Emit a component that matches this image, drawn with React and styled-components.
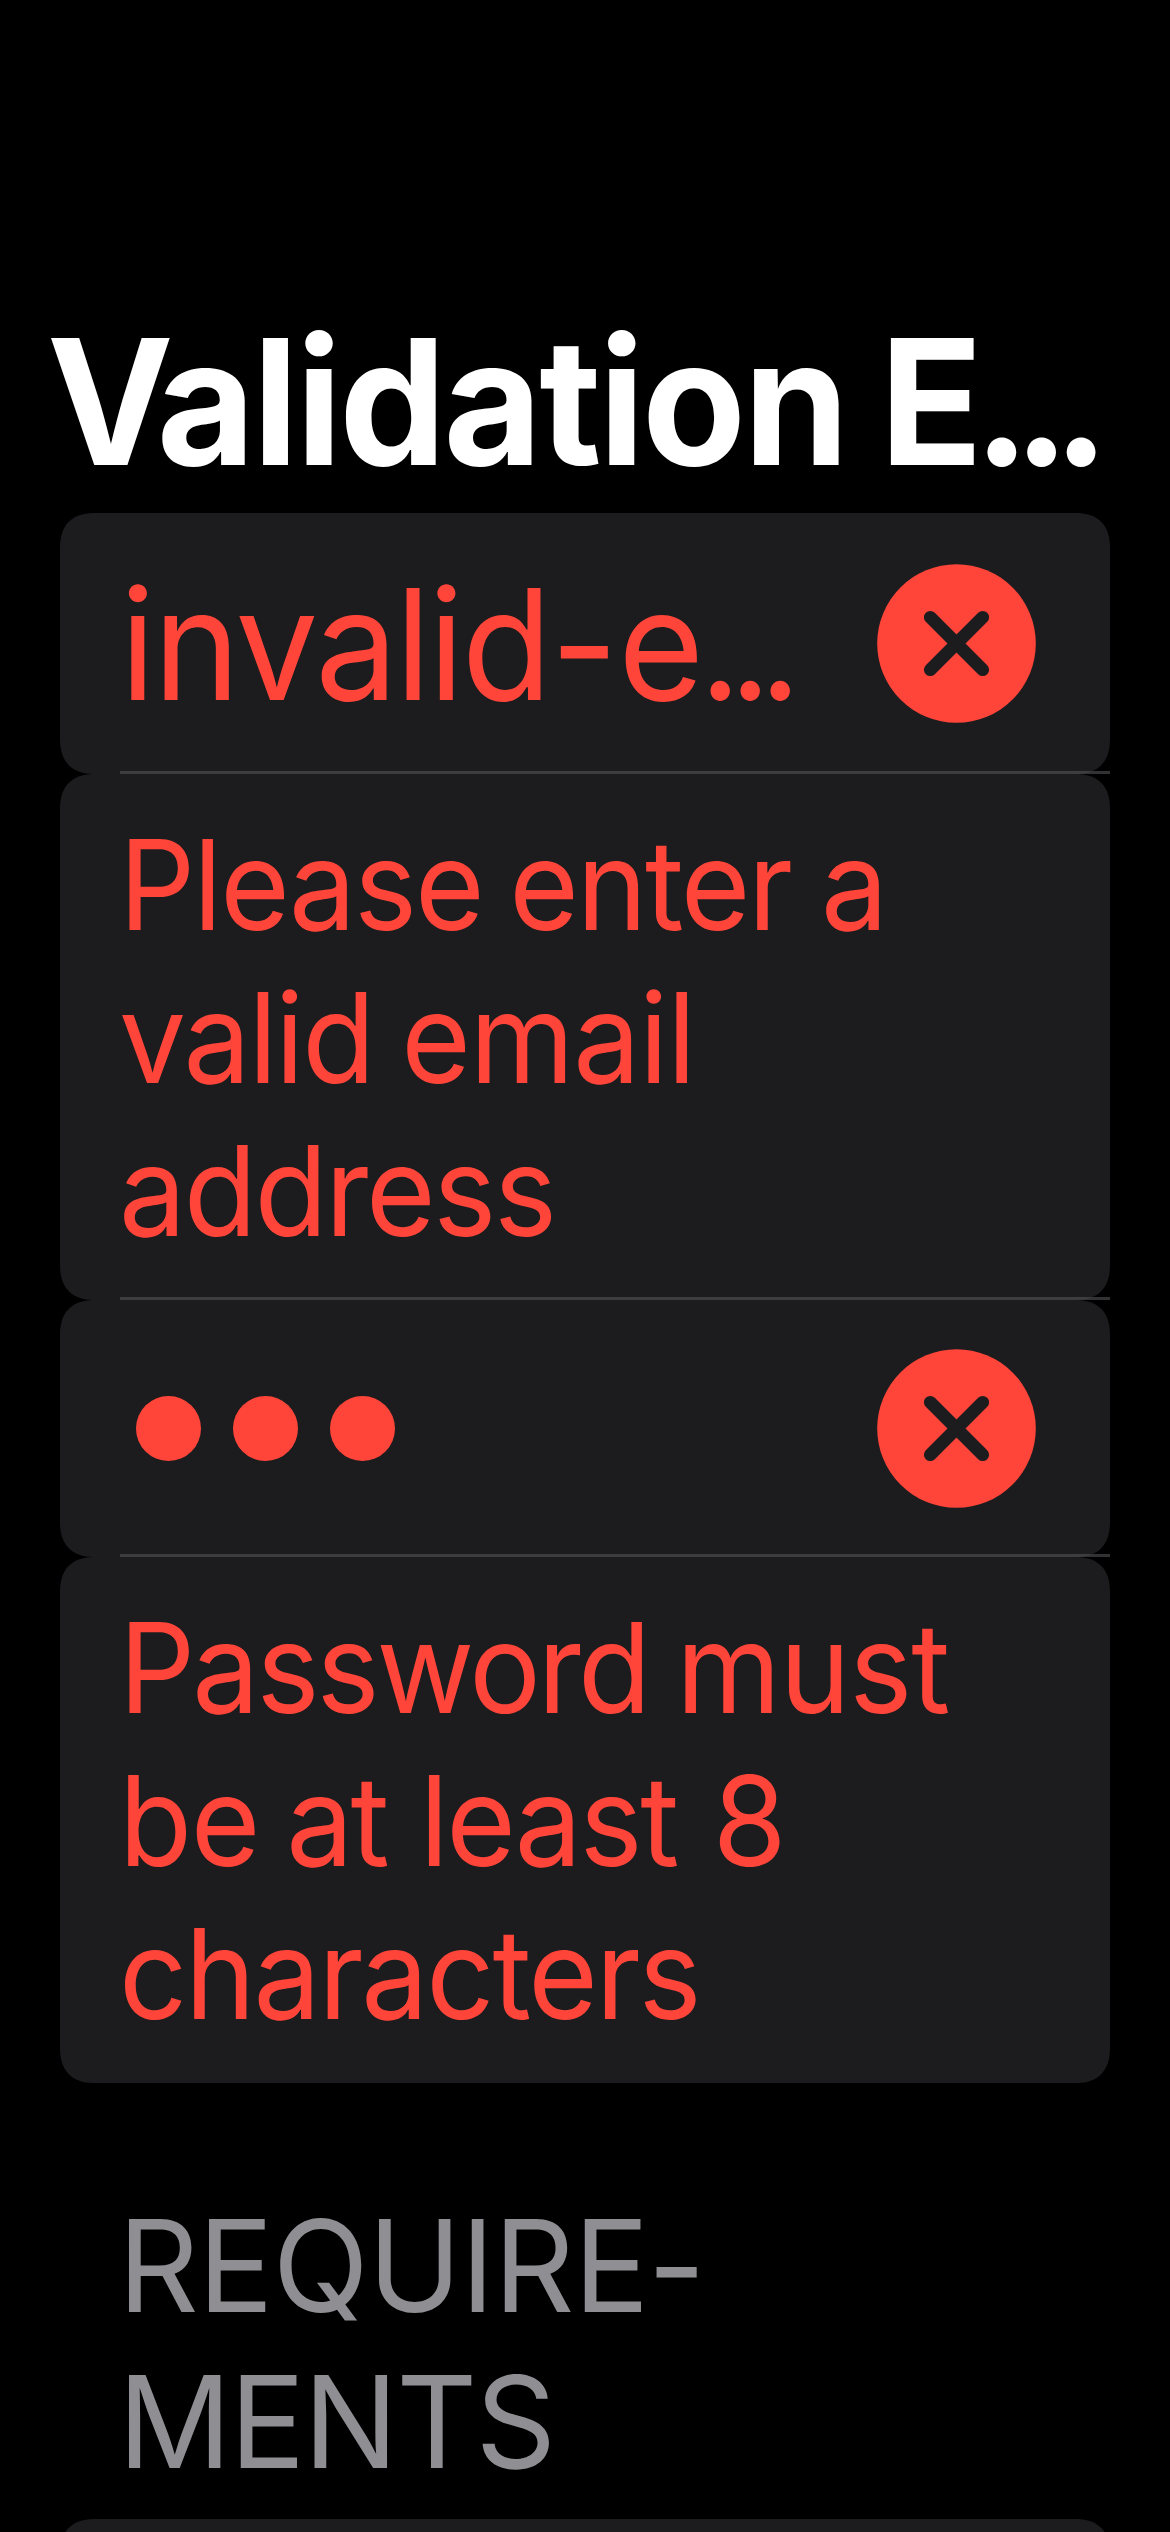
import React from 'react';
import styled, { createGlobalStyle } from 'styled-components';

const GlobalStyle = createGlobalStyle`
  html,
  body {
    margin: 0;
    background: #000;
  }

  *,
  *::before,
  *::after {
    box-sizing: border-box;
  }
`;

const Screen = styled.main`
  display: flex;
  flex-direction: column;
  width: 1170px;
  height: 2532px;
  padding-top: 295px;
  overflow: hidden;
  background: #000;
  color: #fff;
  font-family: Inter, 'Liberation Sans', sans-serif;
`;

const Title = styled.h1`
  width: max-content;
  margin: 0 0 6px 47px;
  font-size: 175px;
  font-weight: 700;
  line-height: 212px;
  white-space: nowrap;
  transform: scaleX(0.97);
  transform-origin: left;
`;

const Part = styled.span`
  letter-spacing: ${({ $tracking = 0 }) => $tracking}px;
  margin-left: ${({ $nudge = 0 }) => $nudge}px;
`;

const List = styled.section`
  display: flex;
  flex-direction: column;
  padding: 0 60px;
`;

const Row = styled.div`
  position: relative;
  display: flex;
  flex: none;
  align-items: ${({ $kind }) => ($kind === 'message' ? 'flex-start' : 'center')};
  justify-content: space-between;
  height: ${({ $height }) => $height}px;
  padding: ${({ $kind }) => ($kind === 'message' ? '34px 59px 33px' : '0 74px 0 60px')};
  border-radius: 36px;
  corner-shape: superellipse(1.3);
  background: #1c1c1e;
  color: #ff453a;
`;

const Separator = styled.span`
  position: absolute;
  right: 0;
  bottom: 0;
  left: 60px;
  z-index: 1;
  height: 3px;
  background: rgba(84, 84, 88, 0.6);
`;

const FieldValue = styled.div`
  width: 700px;
  font-size: 154px;
  line-height: 186px;
  white-space: nowrap;
  transform: scaleX(0.955);
  transform-origin: left;
`;

const Message = styled.p`
  margin: 0;
  font-size: 125px;
  line-height: 153px;
  white-space: nowrap;
  transform: scaleX(0.955);
  transform-origin: left;
`;

const Line = styled.span`
  display: block;
`;

const Bullets = styled.div`
  display: flex;
  gap: 31.5px;
  padding-left: 15.5px;
`;

const Bullet = styled.span`
  width: 65.5px;
  height: 65.5px;
  border-radius: 50%;
  background: currentColor;
`;

const ClearIcon = styled.svg`
  flex: none;
  display: block;
  width: 159px;
  height: 159px;
`;

const SectionHeader = styled.h2`
  margin: 105px 0 19px 118px;
  width: max-content;
  color: #8e8e93;
  font-size: 128px;
  font-weight: 400;
  line-height: 156px;
  white-space: nowrap;
  transform: scaleX(0.98);
  transform-origin: left;
`;

function Clear() {
  return (
    <ClearIcon viewBox="0 0 159 159" aria-hidden="true">
      <circle cx="79.5" cy="79.5" r="79.3" fill="#ff453a" />
      <path
        d="M53.3 53.3 105.7 105.7M105.7 53.3 53.3 105.7"
        stroke="#1c1c1e"
        strokeWidth="12.8"
        strokeLinecap="round"
      />
    </ClearIcon>
  );
}

export default function App() {
  return (
    <>
      <GlobalStyle />
      <Screen>
        <Title>
          <Part>V</Part>
          <Part $tracking={-2.8} $nudge={-17.5}>alidation</Part>{' '}
          <Part $nudge={-7}>E</Part>
          <Part $tracking={-17.5} $nudge={-9.8}>...</Part>
        </Title>

        <List>
          <Row $height={261}>
            <FieldValue>
              <Part $tracking={-2.5}>invalid</Part>
              <Part $nudge={1.1}>-</Part>
              <Part>e</Part>
              <Part $tracking={-13} $nudge={-5.2}>...</Part>
            </FieldValue>
            <Clear />
            <Separator />
          </Row>

          <Row $kind="message" $height={526}>
            <Message>
              <Line>
                <Part $tracking={-2.1}>Please</Part>{' '}
                <Part $tracking={-2.3} $nudge={-7.2}>enter</Part>{' '}
                <Part $nudge={-3.6}>a</Part>
              </Line>
              <Line>
                <Part $tracking={-2.15}>valid</Part>{' '}
                <Part $tracking={-1.1} $nudge={-5.8}>email</Part>
              </Line>
              <Line>
                <Part $tracking={-2.4}>address</Part>
              </Line>
            </Message>
            <Separator />
          </Row>

          <Row $height={257}>
            <Bullets aria-label="Password">
              <Bullet />
              <Bullet />
              <Bullet />
            </Bullets>
            <Clear />
            <Separator />
          </Row>

          <Row $kind="message" $height={526}>
            <Message>
              <Line>
                <Part $tracking={-3.06}>Password</Part>{' '}
                <Part $tracking={-1.1} $nudge={-5.6}>must</Part>
              </Line>
              <Line>
                <Part $tracking={-1.5}>be</Part>{' '}
                <Part $tracking={-3} $nudge={-6.4}>at</Part>{' '}
                <Part $tracking={-2.4} $nudge={-0.6}>least</Part>{' '}
                <Part $nudge={2.2}>8</Part>
              </Line>
              <Line>
                <Part $tracking={-2.2}>characters</Part>
              </Line>
            </Message>
          </Row>
        </List>

        <SectionHeader>
          <Line>
            <Part $tracking={-0.7}>REQUIRE</Part>
            <Part $nudge={-0.8}>-</Part>
          </Line>
          <Line>
            <Part $tracking={-1.7}>MENTS</Part>
          </Line>
        </SectionHeader>

        <List>
          <Row $height={261} />
        </List>
      </Screen>
    </>
  );
}
